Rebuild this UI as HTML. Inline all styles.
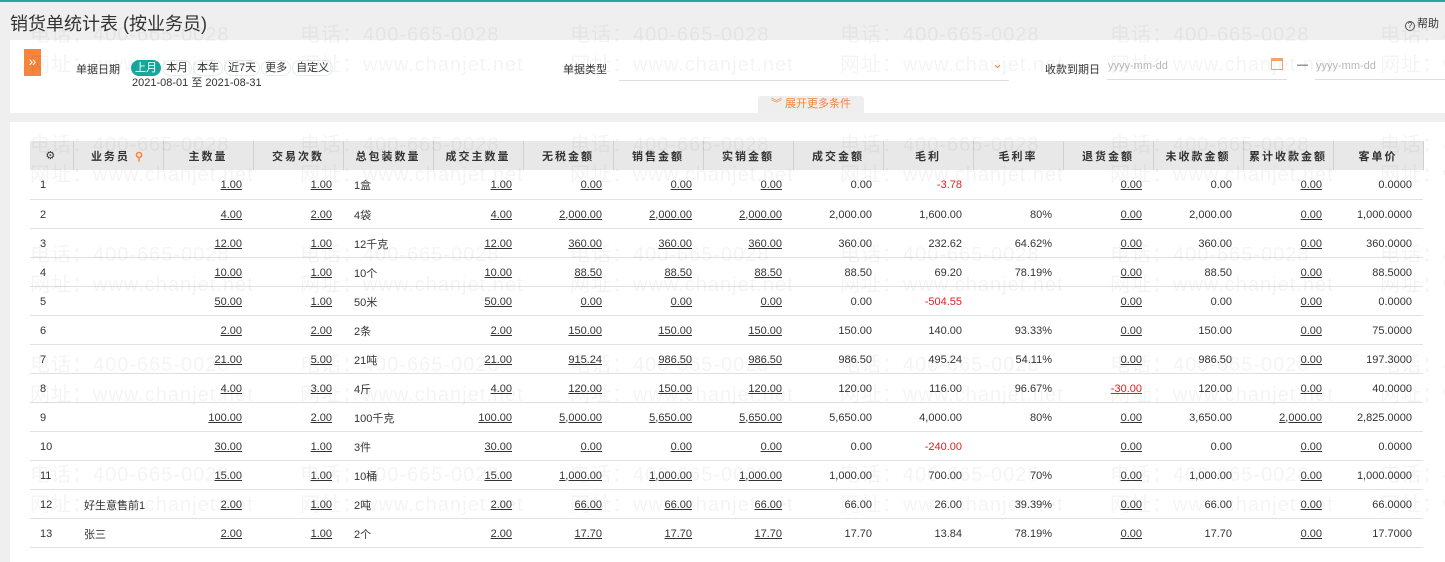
<!DOCTYPE html>
<html><head><meta charset="utf-8">
<style>
*{margin:0;padding:0;box-sizing:border-box}
body{width:1445px;height:562px;overflow:hidden;background:#efefef;font-family:"Liberation Sans","Noto Sans CJK SC",sans-serif;font-size:12px;color:#333;position:relative}
.topline{position:absolute;left:0;top:0;width:1445px;height:2px;background:#27a59a}
.title{position:absolute;left:10px;top:10px;font-size:18px;color:#333}
.help{position:absolute;right:6px;top:15px;font-size:11px;color:#333}
.help i{display:inline-block;width:10px;height:10px;border:1px solid #555;border-radius:50%;font-size:8px;line-height:8px;text-align:center;font-style:normal;margin-right:2px;vertical-align:-1px}
.filter{position:absolute;left:10px;top:40px;width:1435px;height:73px;background:#fff}
.exp{position:absolute;left:14px;top:9px;width:17px;height:27px;background:#f5843c;color:#fff;font-size:14px;line-height:25px;text-align:center}
.lbl{position:absolute;font-size:11px;color:#333}
.tag{display:inline-block;padding:0 3px;border-radius:9px;border:1px solid #e3efec;font-size:11px;line-height:14px;margin-right:1px}
.tag.on{background:#1aa79c;color:#fff;border-color:#1aa79c}
.line{position:absolute;height:1px;background:#ddd}
.ph{position:absolute;color:#b8b8b8;font-size:11px}
.more{position:absolute;left:748px;top:56px;width:106px;height:17px;background:#eee;border-radius:3px 3px 0 0;color:#f5843c;font-size:11px;text-align:center;line-height:17px}
.panel{position:absolute;left:10px;top:122px;width:1435px;height:440px;background:#fff}
table{position:absolute;left:30px;top:141px;border-collapse:collapse;table-layout:fixed}
th{height:29px;background:#e8e8e8;font-weight:bold;font-size:11px;letter-spacing:2px;text-align:center;border-right:1px solid #d0d0d0;color:#333}
td{height:29px;border-bottom:1px solid #e0e0e0;font-size:11px;padding:0 11px;text-align:right;color:#333;padding-top:2px}
td.l{text-align:left}
td:first-child{text-align:left;padding-left:10px}
u{text-decoration:underline}
.r{color:#e02020}
.wm{position:absolute;font-size:20px;color:rgba(0,0,0,0.045);white-space:nowrap;letter-spacing:1px;pointer-events:none}
</style></head><body>
<div class="topline"></div>
<div class="title">销货单统计表 (按业务员)</div>
<div class="help"><i>?</i>帮助</div>
<div class="filter">
<div class="exp">»</div>
<div class="lbl" style="left:66px;top:21px">单据日期</div>
<div class="lbl" style="left:121px;top:20px"><span class="tag on">上月</span><span class="tag">本月</span><span class="tag">本年</span><span class="tag">近7天</span><span class="tag">更多</span><span class="tag">自定义</span></div>
<div class="lbl" style="left:122px;top:34px;font-size:11px">2021-08-01 至 2021-08-31</div>
<div class="lbl" style="left:553px;top:21px">单据类型</div>
<div class="line" style="left:609px;top:40px;width:390px"></div>
<div class="lbl" style="left:982px;top:16px;color:#f5843c;font-size:13px">⌄</div>
<div class="lbl" style="left:1035px;top:21px">收款到期日</div>
<div class="ph" style="left:1098px;top:20px">yyyy-mm-dd</div>
<div class="line" style="left:1097px;top:39px;width:180px"></div>
<div class="lbl" style="left:1261px;top:18px;width:12px;height:12px;border:1px solid #f5a36c;border-top:3px solid #f5a36c"></div>
<div class="lbl" style="left:1287px;top:19px">—</div>
<div class="ph" style="left:1306px;top:20px">yyyy-mm-dd</div>
<div class="line" style="left:1305px;top:39px;width:130px"></div>
<div class="more">︾ 展开更多条件</div>
</div>
<div class="panel"></div>
<table>
<colgroup><col style="width:43px"><col style="width:90px"><col style="width:90px"><col style="width:90px"><col style="width:90px"><col style="width:90px"><col style="width:90px"><col style="width:90px"><col style="width:90px"><col style="width:90px"><col style="width:90px"><col style="width:90px"><col style="width:90px"><col style="width:90px"><col style="width:90px"><col style="width:90px"></colgroup>
<tr><th style="font-weight:normal">⚙</th><th>业务员 <span style="color:#f5843c">⚲</span></th><th>主数量</th><th>交易次数</th><th>总包装数量</th><th>成交主数量</th><th>无税金额</th><th>销售金额</th><th>实销金额</th><th>成交金额</th><th>毛利</th><th>毛利率</th><th>退货金额</th><th>未收款金额</th><th>累计收款金额</th><th>客单价</th></tr>
<tr><td>1</td><td class="l"></td><td><u>1.00</u></td><td><u>1.00</u></td><td class="l">1盒</td><td><u>1.00</u></td><td><u>0.00</u></td><td><u>0.00</u></td><td><u>0.00</u></td><td>0.00</td><td class="r">-3.78</td><td></td><td><u>0.00</u></td><td>0.00</td><td><u>0.00</u></td><td>0.0000</td></tr>
<tr><td>2</td><td class="l"></td><td><u>4.00</u></td><td><u>2.00</u></td><td class="l">4袋</td><td><u>4.00</u></td><td><u>2,000.00</u></td><td><u>2,000.00</u></td><td><u>2,000.00</u></td><td>2,000.00</td><td>1,600.00</td><td>80%</td><td><u>0.00</u></td><td>2,000.00</td><td><u>0.00</u></td><td>1,000.0000</td></tr>
<tr><td>3</td><td class="l"></td><td><u>12.00</u></td><td><u>1.00</u></td><td class="l">12千克</td><td><u>12.00</u></td><td><u>360.00</u></td><td><u>360.00</u></td><td><u>360.00</u></td><td>360.00</td><td>232.62</td><td>64.62%</td><td><u>0.00</u></td><td>360.00</td><td><u>0.00</u></td><td>360.0000</td></tr>
<tr><td>4</td><td class="l"></td><td><u>10.00</u></td><td><u>1.00</u></td><td class="l">10个</td><td><u>10.00</u></td><td><u>88.50</u></td><td><u>88.50</u></td><td><u>88.50</u></td><td>88.50</td><td>69.20</td><td>78.19%</td><td><u>0.00</u></td><td>88.50</td><td><u>0.00</u></td><td>88.5000</td></tr>
<tr><td>5</td><td class="l"></td><td><u>50.00</u></td><td><u>1.00</u></td><td class="l">50米</td><td><u>50.00</u></td><td><u>0.00</u></td><td><u>0.00</u></td><td><u>0.00</u></td><td>0.00</td><td class="r">-504.55</td><td></td><td><u>0.00</u></td><td>0.00</td><td><u>0.00</u></td><td>0.0000</td></tr>
<tr><td>6</td><td class="l"></td><td><u>2.00</u></td><td><u>2.00</u></td><td class="l">2条</td><td><u>2.00</u></td><td><u>150.00</u></td><td><u>150.00</u></td><td><u>150.00</u></td><td>150.00</td><td>140.00</td><td>93.33%</td><td><u>0.00</u></td><td>150.00</td><td><u>0.00</u></td><td>75.0000</td></tr>
<tr><td>7</td><td class="l"></td><td><u>21.00</u></td><td><u>5.00</u></td><td class="l">21吨</td><td><u>21.00</u></td><td><u>915.24</u></td><td><u>986.50</u></td><td><u>986.50</u></td><td>986.50</td><td>495.24</td><td>54.11%</td><td><u>0.00</u></td><td>986.50</td><td><u>0.00</u></td><td>197.3000</td></tr>
<tr><td>8</td><td class="l"></td><td><u>4.00</u></td><td><u>3.00</u></td><td class="l">4斤</td><td><u>4.00</u></td><td><u>120.00</u></td><td><u>150.00</u></td><td><u>120.00</u></td><td>120.00</td><td>116.00</td><td>96.67%</td><td class="r"><u>-30.00</u></td><td>120.00</td><td><u>0.00</u></td><td>40.0000</td></tr>
<tr><td>9</td><td class="l"></td><td><u>100.00</u></td><td><u>2.00</u></td><td class="l">100千克</td><td><u>100.00</u></td><td><u>5,000.00</u></td><td><u>5,650.00</u></td><td><u>5,650.00</u></td><td>5,650.00</td><td>4,000.00</td><td>80%</td><td><u>0.00</u></td><td>3,650.00</td><td><u>2,000.00</u></td><td>2,825.0000</td></tr>
<tr><td>10</td><td class="l"></td><td><u>30.00</u></td><td><u>1.00</u></td><td class="l">3件</td><td><u>30.00</u></td><td><u>0.00</u></td><td><u>0.00</u></td><td><u>0.00</u></td><td>0.00</td><td class="r">-240.00</td><td></td><td><u>0.00</u></td><td>0.00</td><td><u>0.00</u></td><td>0.0000</td></tr>
<tr><td>11</td><td class="l"></td><td><u>15.00</u></td><td><u>1.00</u></td><td class="l">10桶</td><td><u>15.00</u></td><td><u>1,000.00</u></td><td><u>1,000.00</u></td><td><u>1,000.00</u></td><td>1,000.00</td><td>700.00</td><td>70%</td><td><u>0.00</u></td><td>1,000.00</td><td><u>0.00</u></td><td>1,000.0000</td></tr>
<tr><td>12</td><td class="l">好生意售前1</td><td><u>2.00</u></td><td><u>1.00</u></td><td class="l">2吨</td><td><u>2.00</u></td><td><u>66.00</u></td><td><u>66.00</u></td><td><u>66.00</u></td><td>66.00</td><td>26.00</td><td>39.39%</td><td><u>0.00</u></td><td>66.00</td><td><u>0.00</u></td><td>66.0000</td></tr>
<tr><td>13</td><td class="l">张三</td><td><u>2.00</u></td><td><u>1.00</u></td><td class="l">2个</td><td><u>2.00</u></td><td><u>17.70</u></td><td><u>17.70</u></td><td><u>17.70</u></td><td>17.70</td><td>13.84</td><td>78.19%</td><td><u>0.00</u></td><td>17.70</td><td><u>0.00</u></td><td>17.7000</td></tr>
</table>
<div id="wm"></div>
<script>
var h='';var xs=[30,300,570,840,1110,1380];var ys=[18,128,238,348,458];
xs.forEach(function(x){ys.forEach(function(y){h+='<div class="wm" style="left:'+x+'px;top:'+y+'px">电话：400-665-0028</div><div class="wm" style="left:'+x+'px;top:'+(y+30)+'px">网址：www.chanjet.net</div>';});});
document.getElementById('wm').innerHTML=h;
</script>
</body></html>
